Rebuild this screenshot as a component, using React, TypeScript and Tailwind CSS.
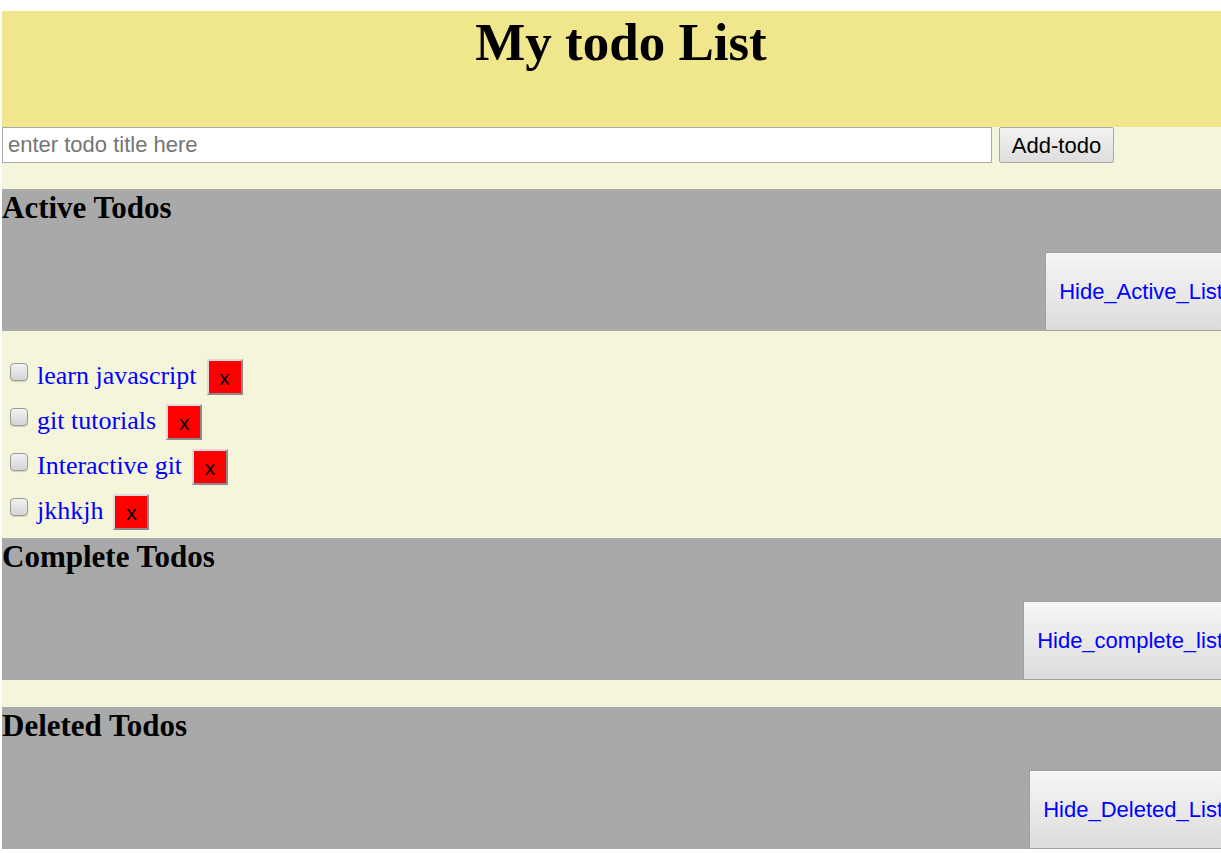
import React from 'react';

const serif = { fontFamily: '"Liberation Serif", "Times New Roman", serif' };
const sans = { fontFamily: '"Liberation Sans", Arial, sans-serif' };

const todos = ['learn javascript', 'git tutorials', 'Interactive git', 'jkhkjh'];

function Section({ title, button }: { title: string; button: string }) {
  return (
    <div className="h-[142px] bg-[#a9a9a9] flex flex-col justify-between">
      <h2 className="text-[31px] leading-[25px] pt-[6px] font-bold text-black m-0" style={serif}>
        {title}
      </h2>
      <div className="flex justify-end pr-[3px]">
        <button
          className="h-[79px] px-[13px] text-[22px] text-[#0000ff] border border-[#a0a0a0] bg-gradient-to-b from-[#f6f6f6] to-[#dcdcdc]"
          style={sans}
        >
          {button}
        </button>
      </div>
    </div>
  );
}

export default function App() {
  return (
    <div className="w-full h-[853px] overflow-hidden bg-white pt-[11px] pl-[2px]">
      <div className="w-[1238px] bg-[#f5f5dc]">
        <div className="h-[116px] bg-[#f0e68c]">
          <h1 className="text-[53px] leading-[63px] font-bold text-black text-center m-0" style={serif}>
            My todo List
          </h1>
        </div>

        <div className="flex items-center h-[36px] gap-[7px]">
          <input
            className="w-[990px] h-[36px] border border-[#a9a9a9] bg-white px-[5px] text-[22px] placeholder:text-[#757575] outline-none"
            style={sans}
            placeholder="enter todo title here"
          />
          <button
            className="w-[115px] h-[36px] text-[22px] text-black border border-[#a9a9a9] rounded-[2px] bg-gradient-to-b from-[#f3f3f3] to-[#dddddd]"
            style={sans}
          >
            Add-todo
          </button>
        </div>
        <div className="h-[26px]" />

        <Section title="Active Todos" button="Hide_Active_List" />

        <ul className="pt-[23px] pb-[4px] m-0 list-none">
          {todos.map((t) => (
            <li key={t} className="h-[45px] flex items-center pl-[8px]">
              <span className="w-[18px] h-[18px] rounded-[4px] border border-[#9a9a9a] bg-gradient-to-b from-[#f2f2f2] to-[#d4d4d4] shadow-[0_1px_1px_rgba(0,0,0,0.15)] -mt-[10px]" />
              <span className="ml-[9px] text-[26px] text-[#0000ff] -mt-[2px]" style={serif}>
                {t}
              </span>
              <button
                className="ml-[10px] w-[36px] h-[36px] bg-[#ff0000] text-black text-[21px] border-2 border-t-[#dcdcdc] border-l-[#dcdcdc] border-b-[#8a8a8a] border-r-[#8a8a8a] flex items-center justify-center pt-[2px]"
                style={sans}
              >
                x
              </button>
            </li>
          ))}
        </ul>

        <Section title="Complete Todos" button="Hide_complete_list" />
        <div className="h-[27px]" />
        <Section title="Deleted Todos" button="Hide_Deleted_List" />
      </div>
    </div>
  );
}
